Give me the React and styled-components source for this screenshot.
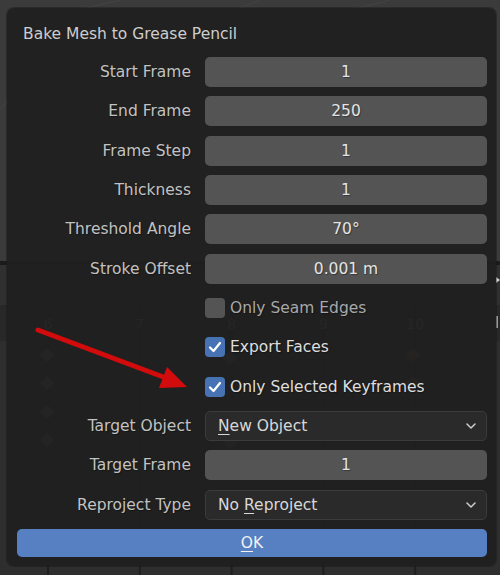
import React from "react";
import styled, { createGlobalStyle } from "styled-components";

const GlobalStyle = createGlobalStyle`
  body {
    margin: 0;
    background: #2b2b2b;
    font-family: "DejaVu Sans", "Liberation Sans", sans-serif;
  }
`;

//styled comp
const Page = styled.div`
  position: relative;
  width: 500px;
  height: 575px;
  overflow: hidden;
  background: #2b2b2b;
`;

const Backdrop = styled.svg`
  position: absolute;
  left: 0;
  top: 0;
`;

const Dialog = styled.div`
  position: relative;
  margin: 8px 0 0 7px;
  width: 489px;
  height: 558px;
  box-sizing: border-box;
  padding: 15px 9px 9px 10px;
  background: rgba(31, 31, 31, 0.92);
  border-radius: 7px;
  box-shadow: 0 0 0 1px rgba(20, 20, 20, 0.4);
`;

const Title = styled.div`
  height: 22px;
  line-height: 22px;
  margin-bottom: 12px;
  padding-left: 6px;
  font-size: 15.5px;
  color: #cdcdcd;
`;

const Form = styled.div`
  display: grid;
  grid-template-columns: 174px 282px;
  grid-auto-rows: 30px;
  column-gap: 14px;
  row-gap: 9.33px;
`;

const Label = styled.div`
  display: flex;
  align-items: center;
  justify-content: flex-end;
  font-size: 15.5px;
  color: #c2c2c2;
  text-shadow: 1px 1px 1px rgba(0, 0, 0, 0.35);
`;

const NumField = styled.div`
  display: flex;
  align-items: center;
  justify-content: center;
  background: #545454;
  border-radius: 5px;
  font-size: 15.5px;
  color: #e4e4e4;
  text-shadow: 1px 1px 1px rgba(0, 0, 0, 0.35);
`;

const Select = styled.div`
  display: flex;
  align-items: center;
  justify-content: space-between;
  box-sizing: border-box;
  padding: 0 10px 0 12px;
  background: #2a2a2a;
  border: 1px solid #3b3b3b;
  border-radius: 5px;
  font-size: 15.5px;
  color: #d8d8d8;
`;

const Accel = styled.span`
  text-decoration: underline;
  text-underline-offset: 3px;
  text-decoration-thickness: 1px;
`;

const CheckRow = styled.div`
  grid-column: 2;
  display: flex;
  align-items: center;
  gap: 5px;
  font-size: 15.5px;
  color: ${(p) => (p.$on ? "#dedede" : "#a8a8a8")};
  text-shadow: 1px 1px 1px rgba(0, 0, 0, 0.35);
`;

const Box = styled.div`
  width: 20px;
  height: 20px;
  display: flex;
  align-items: center;
  justify-content: center;
  border-radius: 4px;
  background: ${(p) => (p.$on ? "#4772b3" : "#545454")};
`;

const OkButton = styled.div`
  grid-column: 1 / 3;
  height: 28px;
  display: flex;
  align-items: center;
  justify-content: center;
  background: #5680c2;
  border-radius: 5px;
  font-size: 15.5px;
  color: #f2f2f2;
`;

const Arrow = styled.svg`
  position: absolute;
  left: 0;
  top: 0;
  pointer-events: none;
`;

const Chevron = () => (
  <svg width="10" height="6" viewBox="0 0 10 6">
    <polyline points="1,1 5,5 9,1" fill="none" stroke="#cfcfcf" strokeWidth="1.5" strokeLinecap="round" strokeLinejoin="round" />
  </svg>
);

const Check = () => (
  <svg width="14" height="12" viewBox="0 0 14 12">
    <polyline points="2,6.5 5.5,10 12,2" fill="none" stroke="#ffffff" strokeWidth="2.2" strokeLinecap="round" strokeLinejoin="round" />
  </svg>
);

const numFields = [
  ["Start Frame", "1"],
  ["End Frame", "250"],
  ["Frame Step", "1"],
  ["Thickness", "1"],
  ["Threshold Angle", "70°"],
  ["Stroke Offset", "0.001 m"],
];

const checks = [
  ["Only Seam Edges", false],
  ["Export Faces", true],
  ["Only Selected Keyframes", true],
];

const frames = ["6", "7", "8", "9", "10"];

const Diamond = ({ x, y, color }) => (
  <rect x={x - 5} y={y - 5} width="10" height="10" fill={color} transform={`rotate(45 ${x} ${y})`} />
);

const TimelineBehind = () => (
  <Backdrop width="500" height="575">
    <rect x="0" y="0" width="500" height="262" fill="#3b3b3b" />
    <line x1="120" y1="0" x2="70" y2="12" stroke="#444" strokeWidth="1" />
    <line x1="240" y1="8" x2="260" y2="0" stroke="#444" strokeWidth="1" />
    <line x1="350" y1="10" x2="390" y2="0" stroke="#444" strokeWidth="1" />
    <line x1="0" y1="110" x2="8" y2="100" stroke="#444" strokeWidth="1" />
    <rect x="0" y="261" width="500" height="4" fill="#1b1b1b" />
    <rect x="0" y="265" width="500" height="40" fill="#303030" />
    <rect x="0" y="305" width="500" height="36" fill="#282828" />
    <rect x="0" y="341" width="500" height="234" fill="#2e2e2e" />
    {frames.map((f, i) => (
      <line key={"l" + f} x1={48 + i * 91.8} y1="305" x2={48 + i * 91.8} y2="575" stroke="#1f1f1f" strokeWidth="2" />
    ))}
    {frames.map((f, i) => (
      <text key={f} x={48 + i * 91.8} y="329" fill="#6e6e6e" fontSize="14" textAnchor="middle" fontFamily="DejaVu Sans">
        {f}
      </text>
    ))}
    {[355, 383, 412, 440].map((y) => (
      <Diamond key={"a" + y} x={47} y={y} color="#5c5c5c" />
    ))}
    {[358, 443].map((y) => (
      <Diamond key={"b" + y} x={230} y={y} color="#505050" />
    ))}
    {[355, 383].map((y) => (
      <Diamond key={"c" + y} x={413} y={y} color="#6a5232" />
    ))}
    <polygon points="496,277 500,280 496,283" fill="#d0d0d0" />
    <rect x="496" y="316" width="2" height="12" fill="#9a9a9a" />
  </Backdrop>
);

const App = () => {
  return (
    <Page>
      <GlobalStyle />
      <TimelineBehind />
      <Dialog>
        <Title>Bake Mesh to Grease Pencil</Title>
        <Form>
          {numFields.map(([label, value]) => (
            <React.Fragment key={label}>
              <Label>{label}</Label>
              <NumField>{value}</NumField>
            </React.Fragment>
          ))}
          {checks.map(([label, on]) => (
            <CheckRow key={label} $on={on}>
              <Box $on={on}>{on && <Check />}</Box>
              {label}
            </CheckRow>
          ))}
          <Label>Target Object</Label>
          <Select>
            <span>
              <Accel>N</Accel>ew Object
            </span>
            <Chevron />
          </Select>
          <Label>Target Frame</Label>
          <NumField>1</NumField>
          <Label>Reproject Type</Label>
          <Select>
            <span>
              No <Accel>R</Accel>eproject
            </span>
            <Chevron />
          </Select>
          <OkButton>
            <span>
              <Accel>O</Accel>K
            </span>
          </OkButton>
        </Form>
      </Dialog>
      <Arrow width="500" height="575">
        <line x1="38" y1="330" x2="166" y2="378" stroke="#d20c0c" strokeWidth="5" strokeLinecap="round" />
        <polygon points="187,387 159,388 167,367" fill="#d20c0c" />
      </Arrow>
    </Page>
  );
};

export default App;
